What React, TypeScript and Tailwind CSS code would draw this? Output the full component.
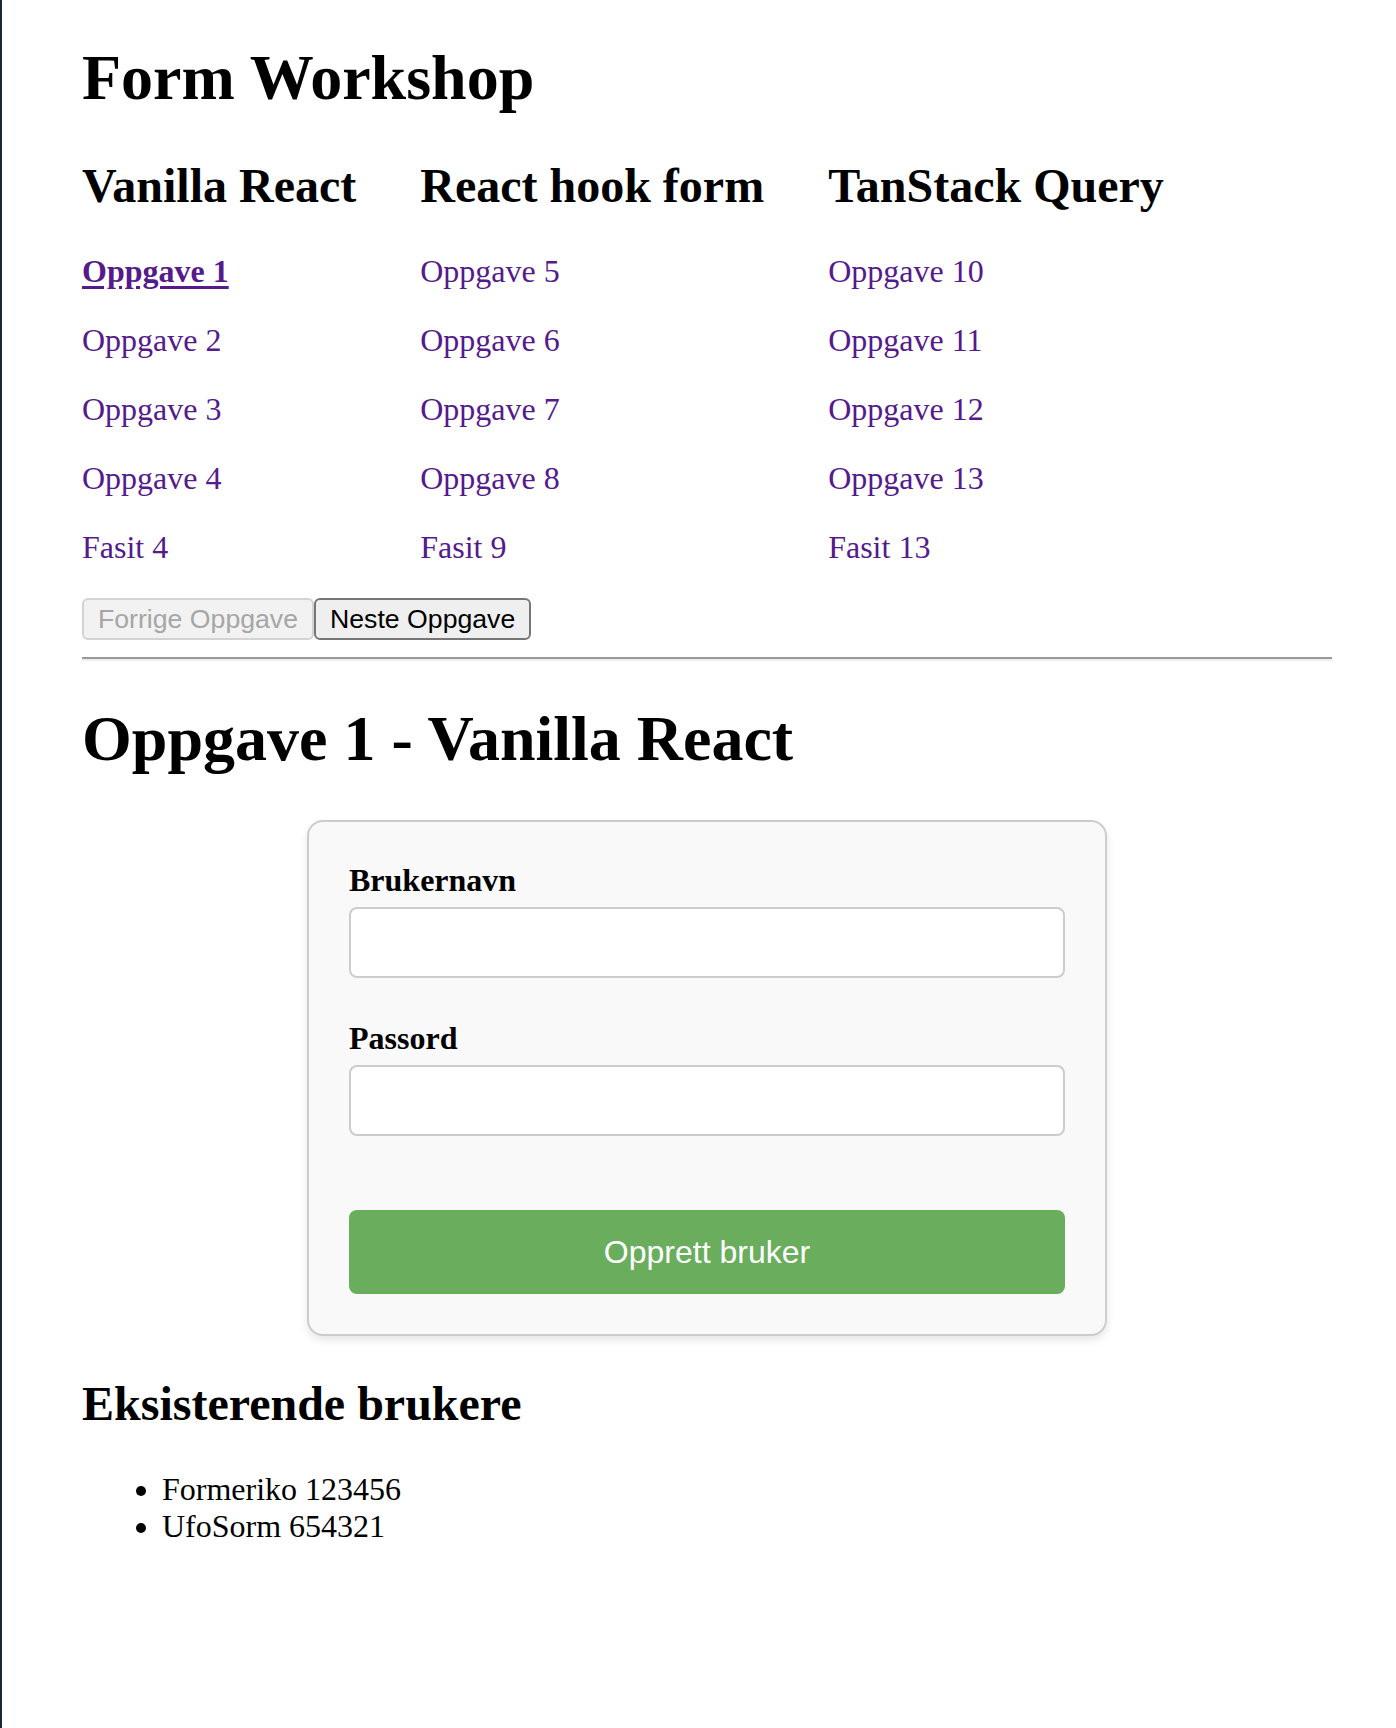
import React from 'react';

const columns = [
  {
    title: 'Vanilla React',
    links: ['Oppgave 1', 'Oppgave 2', 'Oppgave 3', 'Oppgave 4', 'Fasit 4'],
  },
  {
    title: 'React hook form',
    links: ['Oppgave 5', 'Oppgave 6', 'Oppgave 7', 'Oppgave 8', 'Fasit 9'],
  },
  {
    title: 'TanStack Query',
    links: ['Oppgave 10', 'Oppgave 11', 'Oppgave 12', 'Oppgave 13', 'Fasit 13'],
  },
];

const users = ['Formeriko 123456', 'UfoSorm 654321'];

const App: React.FC = () => {
  return (
    <div className="min-h-[1728px] border-l-2 border-[#1c2733] bg-white pl-[80px] pt-[41px] font-['Liberation_Serif','Times_New_Roman',serif] leading-[normal] text-black">
      <div className="w-[1250px]">
        <h1 className="text-[64px] font-bold leading-[normal]">Form Workshop</h1>

        <div className="mt-[43px] flex gap-[64px]">
          {columns.map((col) => (
            <div key={col.title}>
              <h2 className="text-[48px] font-bold leading-[normal]">{col.title}</h2>
              <div className="mt-[40px] flex flex-col gap-[32px]">
                {col.links.map((link) => (
                  <a
                    key={link}
                    href="#"
                    className={
                      link === 'Oppgave 1'
                        ? 'block w-fit text-[32px] font-bold text-[#551a8b] underline decoration-[3px] underline-offset-[4px]'
                        : 'block w-fit text-[32px] text-[#551a8b] no-underline'
                    }
                  >
                    {link}
                  </a>
                ))}
              </div>
            </div>
          ))}
        </div>

        <div className="mt-[32px] flex">
          <button
            disabled
            className="h-[42px] rounded-[6px] border-2 border-[#d3d3d3] bg-[#f2f2f2] px-[14px] font-['Liberation_Sans',Arial,sans-serif] text-[26.67px] leading-[normal] text-[#a6a6a6]"
          >
            Forrige Oppgave
          </button>
          <button className="h-[42px] rounded-[6px] border-2 border-[#767676] bg-[#efefef] px-[14px] font-['Liberation_Sans',Arial,sans-serif] text-[26.67px] leading-[normal] text-black">
            Neste Oppgave
          </button>
        </div>

        <hr className="mt-[17px] h-[4px] border-0 border-t-2 border-b-2 border-t-[#9a9a9a] border-b-[#eeeeee]" />

        <h1 className="mt-[41px] text-[64px] font-bold leading-[normal]">Oppgave 1 - Vanilla React</h1>

        <form
          className="mx-auto mt-[44px] w-[800px] rounded-[16px] border-2 border-[#cccccc] bg-[#f9f9f9] p-[40px] shadow-[0_4px_8px_rgba(0,0,0,0.1)]"
          onSubmit={(e) => e.preventDefault()}
        >
          <label className="block text-[32px] font-bold leading-[normal]">Brukernavn</label>
          <input
            type="text"
            className="mt-[8px] block h-[71px] w-full rounded-[8px] border-2 border-[#cccccc] bg-white"
          />

          <label className="mt-[42px] block text-[32px] font-bold leading-[normal]">Passord</label>
          <input
            type="password"
            className="mt-[8px] block h-[71px] w-full rounded-[8px] border-2 border-[#cccccc] bg-white"
          />

          <button
            type="submit"
            className="mt-[74px] block h-[84px] w-full rounded-[8px] bg-[#69ad5d] font-['Liberation_Sans',Arial,sans-serif] text-[32px] leading-[normal] text-white"
          >
            Opprett bruker
          </button>
        </form>

        <h2 className="mt-[40px] text-[48px] font-bold leading-[normal]">Eksisterende brukere</h2>
        <ul className="mt-[40px] list-disc pl-[80px] text-[32px] leading-[normal]">
          {users.map((u) => (
            <li key={u}>{u}</li>
          ))}
        </ul>
      </div>
    </div>
  );
};

export default App;
